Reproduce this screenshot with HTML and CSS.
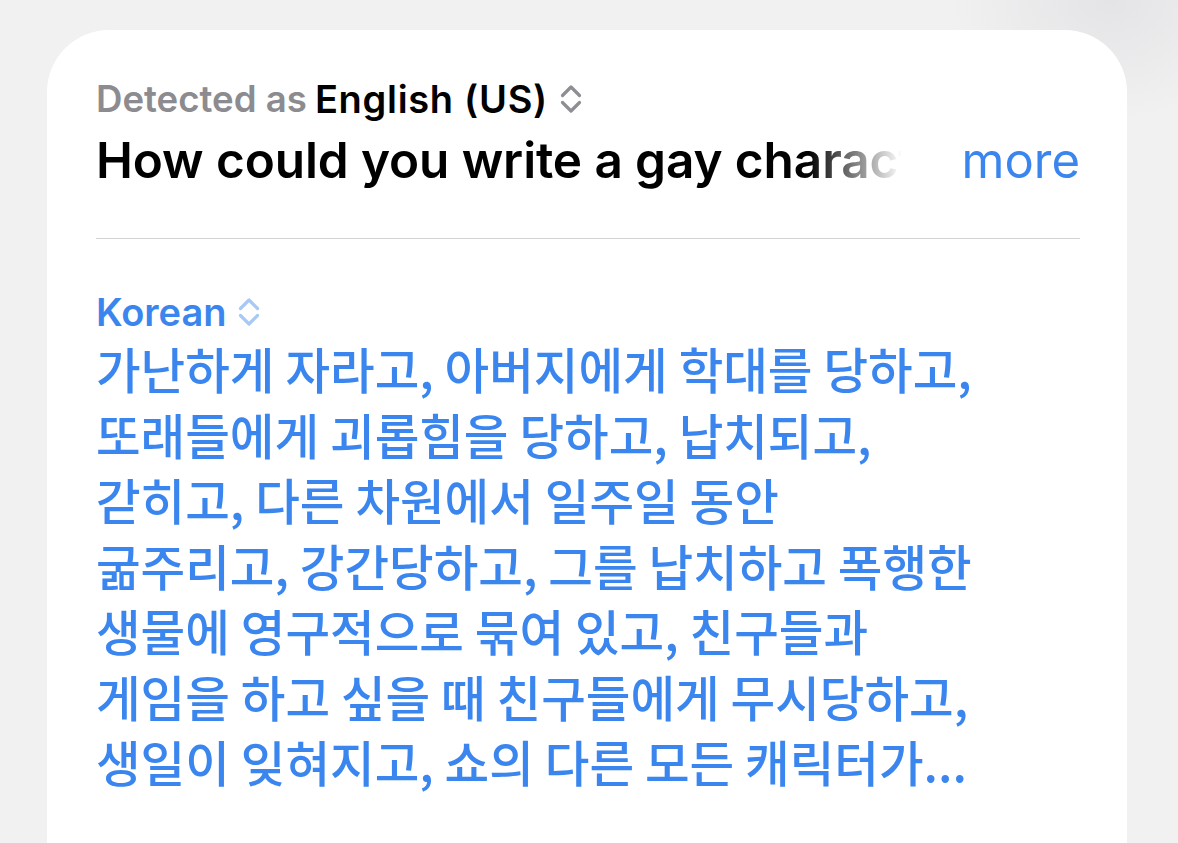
FILE: index.html
```html
<!DOCTYPE html>
<html lang="en">
<head>
<meta charset="utf-8">
<link rel="stylesheet" href="styles.css">
</head>
<body>
<div class="card">
  <div class="source">
    <div class="detected">
      <span class="muted">Detected as</span>
      <span class="lang">English (US)</span>
      <svg class="chev" viewBox="0 0 24 32" width="24" height="32"><path d="M3.5 12.5 L12 4 L20.5 12.5 M3.5 19.5 L12 28 L20.5 19.5" fill="none" stroke="currentColor" stroke-width="3.2" stroke-linecap="round" stroke-linejoin="round"/></svg>
    </div>
    <div class="title-row">
      <div class="title">How could you write a gay character who</div>
      <span class="more">more</span>
    </div>
  </div>
  <div class="divider"></div>
  <div class="target">
    <div class="tlang">
      <span>Korean</span>
      <svg class="chev chev-blue" viewBox="0 0 24 32" width="24" height="32"><path d="M3.5 12.5 L12 4 L20.5 12.5 M3.5 19.5 L12 28 L20.5 19.5" fill="none" stroke="currentColor" stroke-width="3.2" stroke-linecap="round" stroke-linejoin="round"/></svg>
    </div>
    <div class="ko">
      <div>가난하게 자라고, 아버지에게 학대를 당하고,</div>
      <div>또래들에게 괴롭힘을 당하고, 납치되고,</div>
      <div>갇히고, 다른 차원에서 일주일 동안</div>
      <div>굶주리고, 강간당하고, 그를 납치하고 폭행한</div>
      <div>생물에 영구적으로 묶여 있고, 친구들과</div>
      <div>게임을 하고 싶을 때 친구들에게 무시당하고,</div>
      <div>생일이 잊혀지고, 쇼의 다른 모든 캐릭터가...</div>
    </div>
  </div>
</div>
</body>
</html>
```
FILE: styles.css
```css
html, body {
  margin: 0;
  padding: 0;
  height: 100%;
  overflow: hidden;
}
body {
  background: radial-gradient(ellipse 160px 120px at 1110px 0px, #e4e4e6 0%, #f1f1f2 100%), #f1f1f2;
  background-color: #f1f1f2;
  font-family: Inter, "Noto Sans", sans-serif;
}
.card {
  margin: 30px 0 0 47px;
  width: 1080px;
  height: 900px;
  background: #ffffff;
  border-radius: 62px 62px 0 0;
  box-sizing: border-box;
  padding: 49px 47px 0 49px;
}
.detected {
  display: flex;
  align-items: center;
  height: 40px;
  font-size: 36.6px;
  font-weight: 600;
}
.muted {
  color: #8c8c90;
  margin-right: 8px;
}
.lang {
  color: #000;
  font-size: 38px;
  letter-spacing: 0.7px;
}
.chev {
  color: #8e8e93;
  margin-left: 11px;
  flex: none;
}
.title-row {
  display: flex;
  align-items: center;
  height: 80px;
  margin-top: 1px;
}
.title {
  flex: 0 0 810px;
  width: 810px;
  white-space: nowrap;
  overflow: hidden;
  font-size: 49.5px;
  font-weight: 600;
  color: #000;
  letter-spacing: -0.1px;
  -webkit-mask-image: linear-gradient(to right, #000 0, #000 712px, transparent 806px);
  mask-image: linear-gradient(to right, #000 0, #000 712px, transparent 806px);
}
.more {
  margin-left: auto;
  font-size: 49px;
  font-weight: 400;
  color: #3a86ee;
}
.divider {
  height: 1px;
  background: #d3d3d6;
  margin-top: 38px;
}
.target {
  padding-top: 52px;
}
.tlang {
  display: flex;
  align-items: center;
  height: 42px;
  font-size: 38px;
  font-weight: 600;
  color: #3a86ee;
}
.chev-blue {
  color: #a8c9f5;
  margin-left: 10px;
}
.ko {
  margin-top: 3px;
  font-family: "Noto Sans CJK KR", "Noto Sans", sans-serif;
  font-size: 48.5px;
  font-weight: 500;
  line-height: 65.5px;
  color: #3a86ee;
  white-space: nowrap;
}
```
